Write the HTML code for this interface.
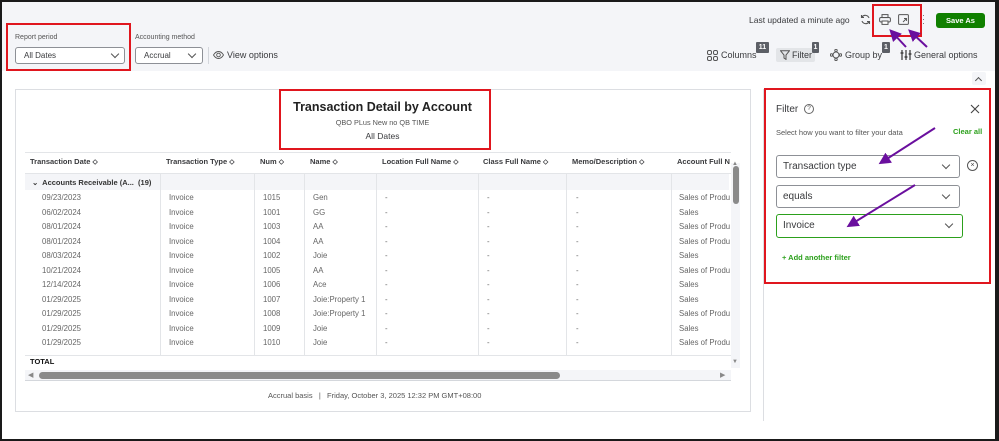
<!DOCTYPE html>
<html><head><meta charset="utf-8"><style>
*{margin:0;padding:0;box-sizing:border-box}
body{width:999px;height:441px;overflow:hidden;background:#fff;font-family:"Liberation Sans",sans-serif;color:#393a3d;position:relative}
.a{position:absolute;white-space:nowrap}
.frame{position:absolute;left:0;top:0;width:999px;height:441px;border:2px solid #1a1a1a;border-right-width:4px;pointer-events:none;z-index:50}
.tb{position:absolute;left:2px;top:2px;width:993px;height:69px;background:#f4f5f8}
.sel{position:absolute;background:#fff;border:1px solid #8d9096;border-radius:3px;font-size:8px;padding-left:8px;line-height:15px}
.chev{position:absolute;width:6px;height:6px;border-right:1.2px solid #555;border-bottom:1.2px solid #555;transform:rotate(45deg)}
.red{position:absolute;border:2px solid #e0161e}
.badge{position:absolute;background:#5c5f66;color:#fff;font-size:7px;font-weight:bold;text-align:center;line-height:11px;border-radius:1px}
.th{position:absolute;top:157px;font-size:7.5px;color:#393a3d;font-weight:600;white-space:nowrap}
.td{position:absolute;font-size:7.8px;color:#666;white-space:nowrap}
.vl{position:absolute;top:174px;height:181px;width:1px;background:#e3e5e8}
.fs{position:absolute;background:#fff;border:1px solid #8d9096;border-radius:3px;font-size:10px;padding-left:6px;color:#393a3d}
</style></head><body>
<div class="tb"></div>
<div class="a" style="left:15px;top:34px;font-size:7px;color:#555">Report period</div>
<div class="sel" style="left:15px;top:47px;width:110px;height:17px">All Dates<div class="chev" style="left:96px;top:3px"></div></div>
<div class="red" style="left:6px;top:23px;width:125px;height:48px"></div>
<div class="a" style="left:135px;top:34px;font-size:7px;color:#555">Accounting method</div>
<div class="sel" style="left:135px;top:47px;width:68px;height:17px">Accrual<div class="chev" style="left:53px;top:3px"></div></div>
<div class="a" style="left:208px;top:47px;width:1px;height:17px;background:#d4d7dc"></div>
<svg class="a" style="left:213px;top:51px" width="11" height="8" viewBox="0 0 11 8"><path d="M0.5 4C2 1.5 4 0.5 5.5 0.5S9 1.5 10.5 4C9 6.5 7 7.5 5.5 7.5S2 6.5 0.5 4Z" fill="none" stroke="#555" stroke-width="0.9"/><circle cx="5.5" cy="4" r="1.8" fill="none" stroke="#555" stroke-width="0.9"/></svg>
<div class="a" style="left:227px;top:50px;font-size:9px;color:#393a3d">View options</div>

<div class="a" style="left:749px;top:15px;font-size:8.5px;color:#393a3d">Last updated a minute ago</div>
<svg class="a" style="left:860px;top:14px" width="11" height="11" viewBox="0 0 11 11"><path d="M9 4A4 4 0 0 0 2 3M2 7A4 4 0 0 0 9 8" fill="none" stroke="#555" stroke-width="1.1"/><path d="M1.5 1V3.5H4M9.5 10V7.5H7" fill="none" stroke="#555" stroke-width="1.1"/></svg>
<svg class="a" style="left:879px;top:14px" width="12" height="11" viewBox="0 0 12 11"><rect x="3" y="0.6" width="6" height="3" fill="none" stroke="#555" stroke-width="1"/><rect x="0.6" y="3.5" width="10.8" height="4.5" rx="1.5" fill="none" stroke="#555" stroke-width="1"/><rect x="3" y="7" width="6" height="3.4" fill="#fff" stroke="#555" stroke-width="1"/></svg>
<svg class="a" style="left:898px;top:14px" width="11" height="11" viewBox="0 0 11 11"><rect x="0.6" y="0.6" width="9.8" height="9.8" rx="1" fill="none" stroke="#555" stroke-width="1"/><path d="M5 8L8.5 4.5M6 4.5H8.5V7" fill="none" stroke="#555" stroke-width="0.9"/></svg>
<div class="a" style="left:922px;top:13px;font-size:9px;color:#666;line-height:4px">·<br>·<br>·</div>
<div class="red" style="left:872px;top:4px;width:50px;height:33px"></div>
<div class="a" style="left:936px;top:13px;width:49px;height:15px;background:#108000;border-radius:3px;color:#fff;font-size:7.5px;font-weight:bold;text-align:center;line-height:15px">Save As</div>

<svg class="a" style="left:707px;top:50px" width="11" height="11" viewBox="0 0 11 11" fill="none" stroke="#555" stroke-width="1"><rect x="0.5" y="0.5" width="4" height="4" rx="1.5"/><rect x="6.5" y="0.5" width="4" height="4" rx="1.5"/><rect x="0.5" y="6.5" width="4" height="4" rx="1.5"/><rect x="6.5" y="6.5" width="4" height="4" rx="1.5"/></svg>
<div class="a" style="left:721px;top:50px;font-size:9px">Columns</div>
<div class="badge" style="left:756px;top:42px;width:13px">11</div>
<div class="a" style="left:776px;top:48px;width:39px;height:14px;background:#e3e5e8;border-radius:2px"></div>
<svg class="a" style="left:780px;top:50px" width="10" height="10" viewBox="0 0 10 10"><path d="M0.6 0.8H9.4L6 5V9.4L4 8V5Z" fill="none" stroke="#555" stroke-width="1"/></svg>
<div class="a" style="left:792px;top:50px;font-size:9px">Filter</div>
<div class="badge" style="left:812px;top:42px;width:7px">1</div>
<svg class="a" style="left:830px;top:49px" width="12" height="12" viewBox="0 0 12 12" fill="none" stroke="#555" stroke-width="1"><circle cx="6" cy="6" r="3"/><circle cx="6" cy="1.5" r="1.2"/><circle cx="6" cy="10.5" r="1.2"/><circle cx="1.5" cy="6" r="1.2"/><circle cx="10.5" cy="6" r="1.2"/></svg>
<div class="a" style="left:845px;top:50px;font-size:9px">Group by</div>
<div class="badge" style="left:882px;top:42px;width:8px">1</div>
<svg class="a" style="left:900px;top:49px" width="12" height="12" viewBox="0 0 12 12" stroke="#333" stroke-width="1.2"><path d="M2 1V11M6 1V11M10 1V11"/><path d="M0.5 4H3.5M4.5 8H7.5M8.5 5H11.5"/></svg>
<div class="a" style="left:914px;top:50px;font-size:9px">General options</div>
<div class="a" style="left:972px;top:72px;width:14px;height:13px;background:#f4f5f8;border-radius:2px"></div>
<div class="chev" style="left:976px;top:78px;transform:rotate(225deg);width:5px;height:5px"></div>

<div class="a" style="left:15px;top:89px;width:736px;height:323px;border:1px solid #dcdee2"></div>
<div class="a" style="left:280px;top:100px;width:205px;text-align:center;font-size:12.5px;font-weight:bold;color:#222">Transaction Detail by Account</div>
<div class="a" style="left:280px;top:118px;width:205px;text-align:center;font-size:7.3px;color:#555">QBO PLus New no QB TIME</div>
<div class="a" style="left:280px;top:131px;width:205px;text-align:center;font-size:8.5px;color:#393a3d">All Dates</div>
<div class="red" style="left:279px;top:89px;width:212px;height:61px"></div>

<div class="a" style="left:25px;top:152px;width:706px;height:1px;background:#e3e5e8"></div>
<div class="a" style="left:25px;top:173px;width:706px;height:1px;background:#e3e5e8"></div>
<div class="th" style="left:30px">Transaction Date ⬦</div>
<div class="th" style="left:166px">Transaction Type ⬦</div>
<div class="th" style="left:260px">Num ⬦</div>
<div class="th" style="left:310px">Name ⬦</div>
<div class="th" style="left:382px">Location Full Name ⬦</div>
<div class="th" style="left:483px">Class Full Name ⬦</div>
<div class="th" style="left:572px">Memo/Description ⬦</div>
<div class="th" style="left:677px">Account Full N</div>
<div class="a" style="left:25px;top:174px;width:704px;height:16px;background:#f4f5f8"></div>
<div class="vl" style="left:160px"></div><div class="vl" style="left:254px"></div><div class="vl" style="left:304px"></div><div class="vl" style="left:376px"></div><div class="vl" style="left:478px"></div><div class="vl" style="left:566px"></div><div class="vl" style="left:671px"></div>
<div class="a" style="left:32px;top:178px;font-size:7.5px;font-weight:bold;color:#333">⌄&nbsp; Accounts Receivable (A... &nbsp;(19)</div>

<div id="rows"></div>
<script>
var r=[["09/23/2023","1015","Gen","Sales of Produ"],["06/02/2024","1001","GG","Sales"],["08/01/2024","1003","AA","Sales of Produ"],["08/01/2024","1004","AA","Sales of Produ"],["08/03/2024","1002","Joie","Sales"],["10/21/2024","1005","AA","Sales of Produ"],["12/14/2024","1006","Ace","Sales"],["01/29/2025","1007","Joie:Property 1","Sales"],["01/29/2025","1008","Joie:Property 1","Sales of Produ"],["01/29/2025","1009","Joie","Sales"],["01/29/2025","1010","Joie","Sales of Produ"]];
var h="";r.forEach(function(x,i){var y=193+i*14.5;
h+='<div class="td" style="left:42px;top:'+y+'px">'+x[0]+'</div><div class="td" style="left:169px;top:'+y+'px">Invoice</div><div class="td" style="left:263px;top:'+y+'px">'+x[1]+'</div><div class="td" style="left:313px;top:'+y+'px">'+x[2]+'</div><div class="td" style="left:385px;top:'+y+'px">-</div><div class="td" style="left:487px;top:'+y+'px">-</div><div class="td" style="left:576px;top:'+y+'px">-</div><div class="td" style="left:679px;top:'+y+'px;width:52px;overflow:hidden">'+x[3]+'</div>';});
document.getElementById("rows").innerHTML=h;
</script>
<div class="a" style="left:25px;top:355px;width:706px;height:1px;background:#e3e5e8"></div>
<div class="a" style="left:30px;top:357px;font-size:7.5px;font-weight:bold;color:#111">TOTAL</div>
<div class="a" style="left:731px;top:163px;width:9px;height:205px;background:#f4f5f8"></div>
<div class="a" style="left:733px;top:166px;width:6px;height:38px;background:#8a8a8a;border-radius:3px"></div>
<div class="a" style="left:732px;top:161px;font-size:6px;color:#888">▲</div>
<div class="a" style="left:732px;top:359px;font-size:6px;color:#888">▼</div>
<div class="a" style="left:25px;top:370px;width:706px;height:11px;background:#f4f5f8;border-bottom:1px solid #d4d7dc"></div>
<div class="a" style="left:39px;top:372px;width:521px;height:7px;background:#8a8a8a;border-radius:4px"></div>
<div class="a" style="left:28px;top:371px;font-size:7px;color:#888">◀</div>
<div class="a" style="left:720px;top:371px;font-size:7px;color:#888">▶</div>
<div class="a" style="left:268px;top:391px;font-size:7.5px;color:#555">Accrual basis &nbsp;&nbsp;|&nbsp;&nbsp; Friday, October 3, 2025 12:32 PM GMT+08:00</div>

<div class="a" style="left:763px;top:89px;width:1px;height:332px;background:#dcdee2"></div>
<div class="a" style="left:776px;top:104px;font-size:10px;color:#393a3d">Filter</div>
<div class="a" style="left:804px;top:104px;width:10px;height:10px;border:1px solid #666;border-radius:50%;font-size:6.5px;text-align:center;line-height:8px;color:#555">?</div>
<svg class="a" style="left:970px;top:104px" width="10" height="10" viewBox="0 0 10 10"><path d="M1 1L9 9M9 1L1 9" stroke="#444" stroke-width="1.1"/></svg>
<div class="a" style="left:776px;top:128px;font-size:7.5px;color:#555">Select how you want to filter your data</div>
<div class="a" style="left:953px;top:127px;font-size:7.5px;font-weight:bold;color:#2ca01c">Clear all</div>
<div class="fs" style="left:776px;top:155px;width:184px;height:23px;line-height:21px">Transaction type<div class="chev" style="left:166px;top:6px"></div></div>
<div class="a" style="left:967px;top:160px;width:11px;height:11px;border:1px solid #555;border-radius:50%;font-size:7px;text-align:center;line-height:9px;color:#444">×</div>
<div class="fs" style="left:776px;top:185px;width:184px;height:23px;line-height:21px">equals<div class="chev" style="left:166px;top:6px"></div></div>
<div class="fs" style="left:776px;top:214px;width:187px;height:24px;line-height:21px;border:1.5px solid #2ca01c">Invoice<div class="chev" style="left:169px;top:6px"></div></div>
<div class="a" style="left:782px;top:253px;font-size:7.5px;font-weight:bold;color:#2ca01c">+ Add another filter</div>
<div class="red" style="left:764px;top:88px;width:227px;height:196px"></div>

<svg class="a" style="left:0;top:0;z-index:40" width="999" height="441" viewBox="0 0 999 441">
<defs><marker id="h" markerWidth="6" markerHeight="6" refX="4" refY="3" orient="auto"><path d="M0 0L6 3L0 6Z" fill="#6a0f9e"/></marker></defs>
<g stroke="#6a0f9e" stroke-width="2" fill="none" marker-end="url(#h)">
<line x1="935" y1="128" x2="882" y2="162"/>
<line x1="915" y1="185" x2="850" y2="225"/>
<line x1="906" y1="47" x2="892" y2="32"/>
<line x1="927" y1="47" x2="911" y2="32"/>
</g></svg>
<div class="frame"></div>
</body></html>
